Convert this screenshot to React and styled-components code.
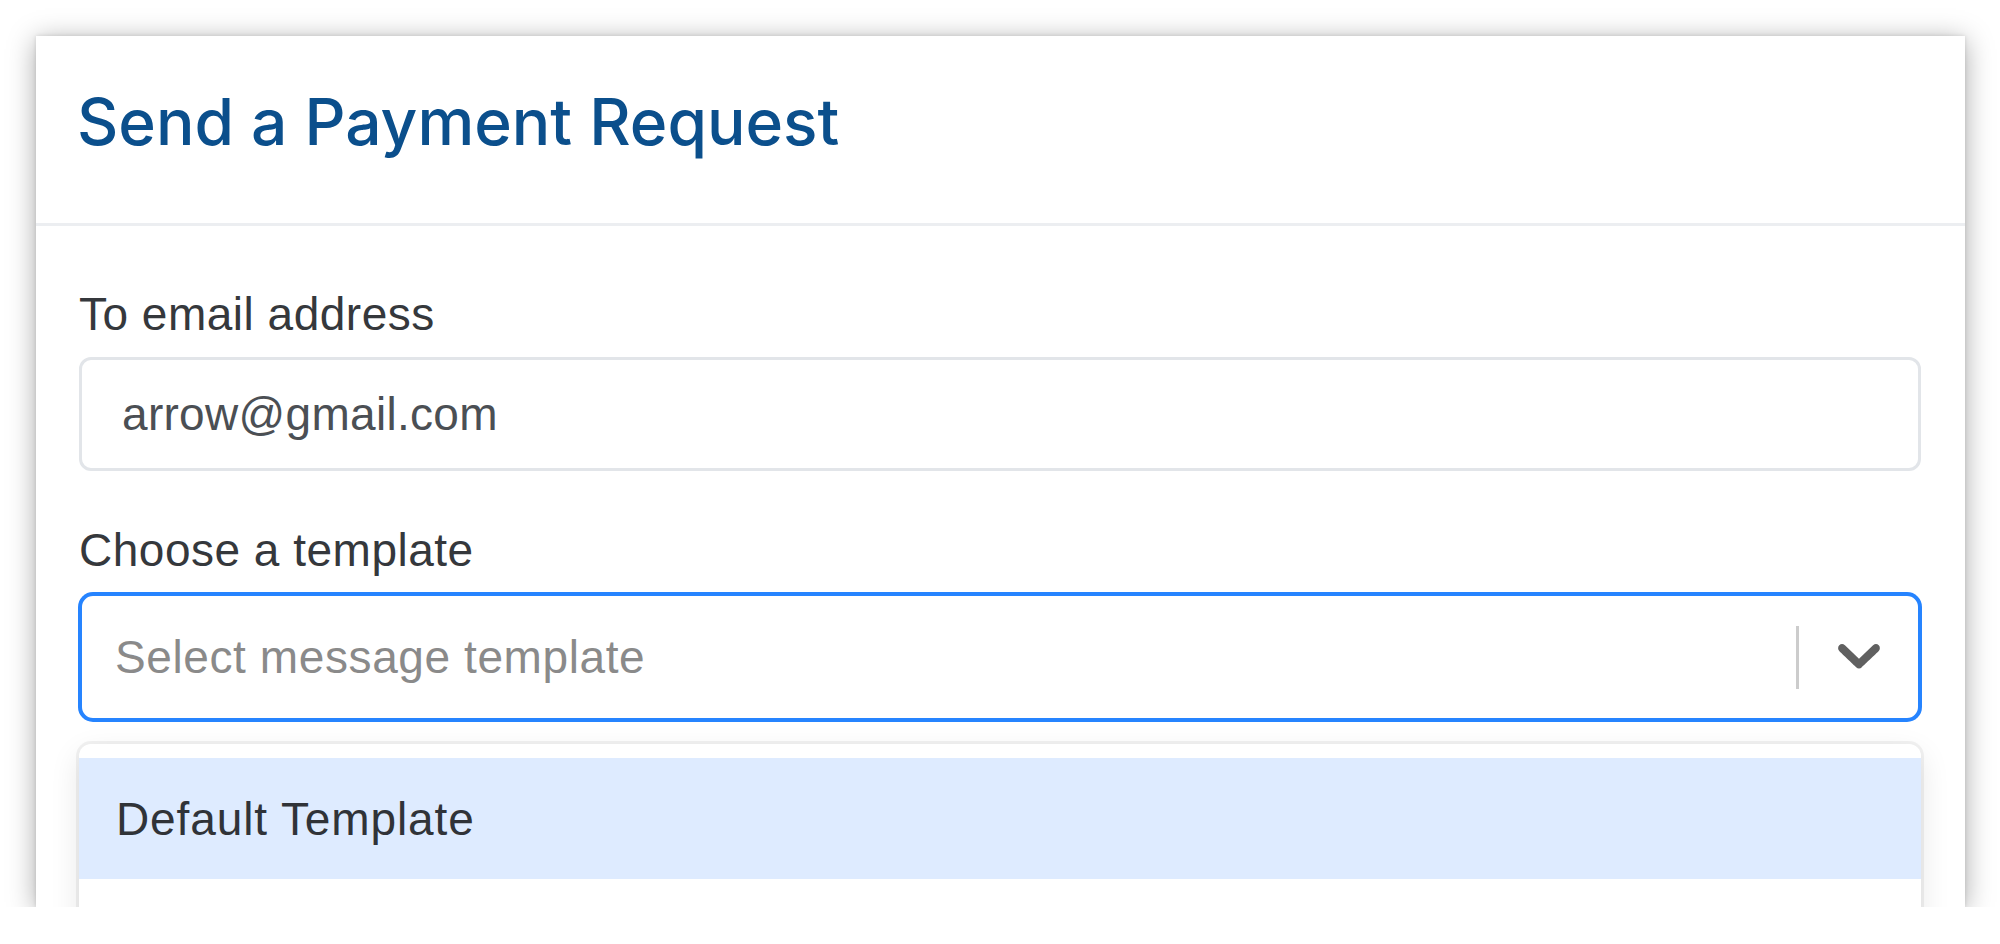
import * as React from "react"
import styled, { createGlobalStyle } from "styled-components"

const GlobalStyle = createGlobalStyle`
  html, body {
    margin: 0;
    padding: 0;
    background: #ffffff;
  }
  * {
    box-sizing: border-box;
  }
`

const ChevronDown = () => (
  <svg width="72" height="72" viewBox="0 0 20 20" aria-hidden="true" focusable="false">
    <path
      fill="currentColor"
      d="M4.516 7.548c0.436-0.446 1.043-0.481 1.576 0l3.908 3.747 3.908-3.747c0.533-0.481 1.141-0.446 1.574 0 0.436 0.445 0.408 1.197 0 1.615-0.406 0.418-4.695 4.502-4.695 4.502-0.217 0.223-0.502 0.335-0.787 0.335s-0.57-0.112-0.789-0.335c0 0-4.287-4.084-4.695-4.502s-0.436-1.17 0-1.615z"
    />
  </svg>
)

export default function App() {
  return (
    <>
      <GlobalStyle />
      <Page>
        <Card>
          <CardHeader>
            <Title>Send a Payment Request</Title>
          </CardHeader>
          <CardBody>
            <Field>
              <Label htmlFor="to-email">To email address</Label>
              <TextInput id="to-email" defaultValue="arrow@gmail.com" />
            </Field>
            <Field>
              <Label>Choose a template</Label>
              <SelectControl>
                <ValueContainer>
                  <Placeholder>Select message template</Placeholder>
                </ValueContainer>
                <Indicators>
                  <Separator />
                  <IndicatorButton>
                    <ChevronDown />
                  </IndicatorButton>
                </Indicators>
              </SelectControl>
              <Menu>
                <Option $focused>Default Template</Option>
              </Menu>
            </Field>
          </CardBody>
        </Card>
      </Page>
    </>
  )
}

const Page = styled.main`
  padding: 36px 35px 0 36px;
`

const Card = styled.section`
  height: 871px;
  overflow: hidden;
  background: #ffffff;
  box-shadow: 0 4px 26px rgba(0, 0, 0, 0.34), 0 0 4px rgba(0, 0, 0, 0.12);
`

const CardHeader = styled.header`
  height: 190px;
  padding: 54px 44px 0 41px;
  border-bottom: 3px solid #eceef1;
`

const Title = styled.h1`
  margin: 0;
  font-family: Inter, "Liberation Sans", sans-serif;
  font-weight: 500;
  font-size: 64px;
  line-height: 64px;
  letter-spacing: 0;
  color: #0b4f8c;
`

const CardBody = styled.div`
  display: flex;
  flex-direction: column;
  gap: 51px;
  padding: 60px 44px 0 43px;
`

const Field = styled.div`
  display: flex;
  flex-direction: column;
`

const Label = styled.label`
  margin-bottom: 15px;
  font-family: "Liberation Sans", Arial, sans-serif;
  font-size: 46px;
  line-height: 56px;
  letter-spacing: 0.5px;
  color: #35383c;
`

const TextInput = styled.input`
  height: 114px;
  padding: 0 40px;
  border: 3px solid #e2e5e9;
  border-radius: 12px;
  outline: none;
  background: #ffffff;
  font-family: "Liberation Sans", Arial, sans-serif;
  font-size: 46px;
  letter-spacing: 0.3px;
  color: #4b4f54;
`

const SelectControl = styled.div`
  display: flex;
  align-items: center;
  height: 128px;
  border: 3px solid #2684ff;
  border-radius: 14px;
  box-shadow: 0 0 0 1px #2684ff;
  background: #ffffff;
`

const ValueContainer = styled.div`
  flex: 1;
  padding-left: 33px;
`

const Placeholder = styled.span`
  font-family: "Liberation Sans", Arial, sans-serif;
  font-size: 46px;
  letter-spacing: 0.6px;
  color: #8a8a8a;
`

const Indicators = styled.div`
  display: flex;
  align-items: center;
  align-self: stretch;
`

const Separator = styled.span`
  width: 3px;
  height: 63px;
  background: #cccccc;
`

const IndicatorButton = styled.div`
  display: flex;
  align-items: center;
  justify-content: center;
  width: 119px;
  padding-bottom: 6px;
  color: #606060;
`

const Menu = styled.div`
  margin-top: 23px;
  padding: 14px 0 160px;
  border-radius: 12px;
  background: #ffffff;
  box-shadow: 0 0 0 3px rgba(0, 0, 0, 0.05), 0 10px 30px rgba(0, 0, 0, 0.1);
`

const Option = styled.div`
  display: flex;
  align-items: center;
  height: 121px;
  padding-left: 37px;
  background: ${(p) => (p.$focused ? "#deebff" : "transparent")};
  font-family: "Liberation Sans", Arial, sans-serif;
  font-size: 46px;
  letter-spacing: 0.9px;
  color: #303338;
`
